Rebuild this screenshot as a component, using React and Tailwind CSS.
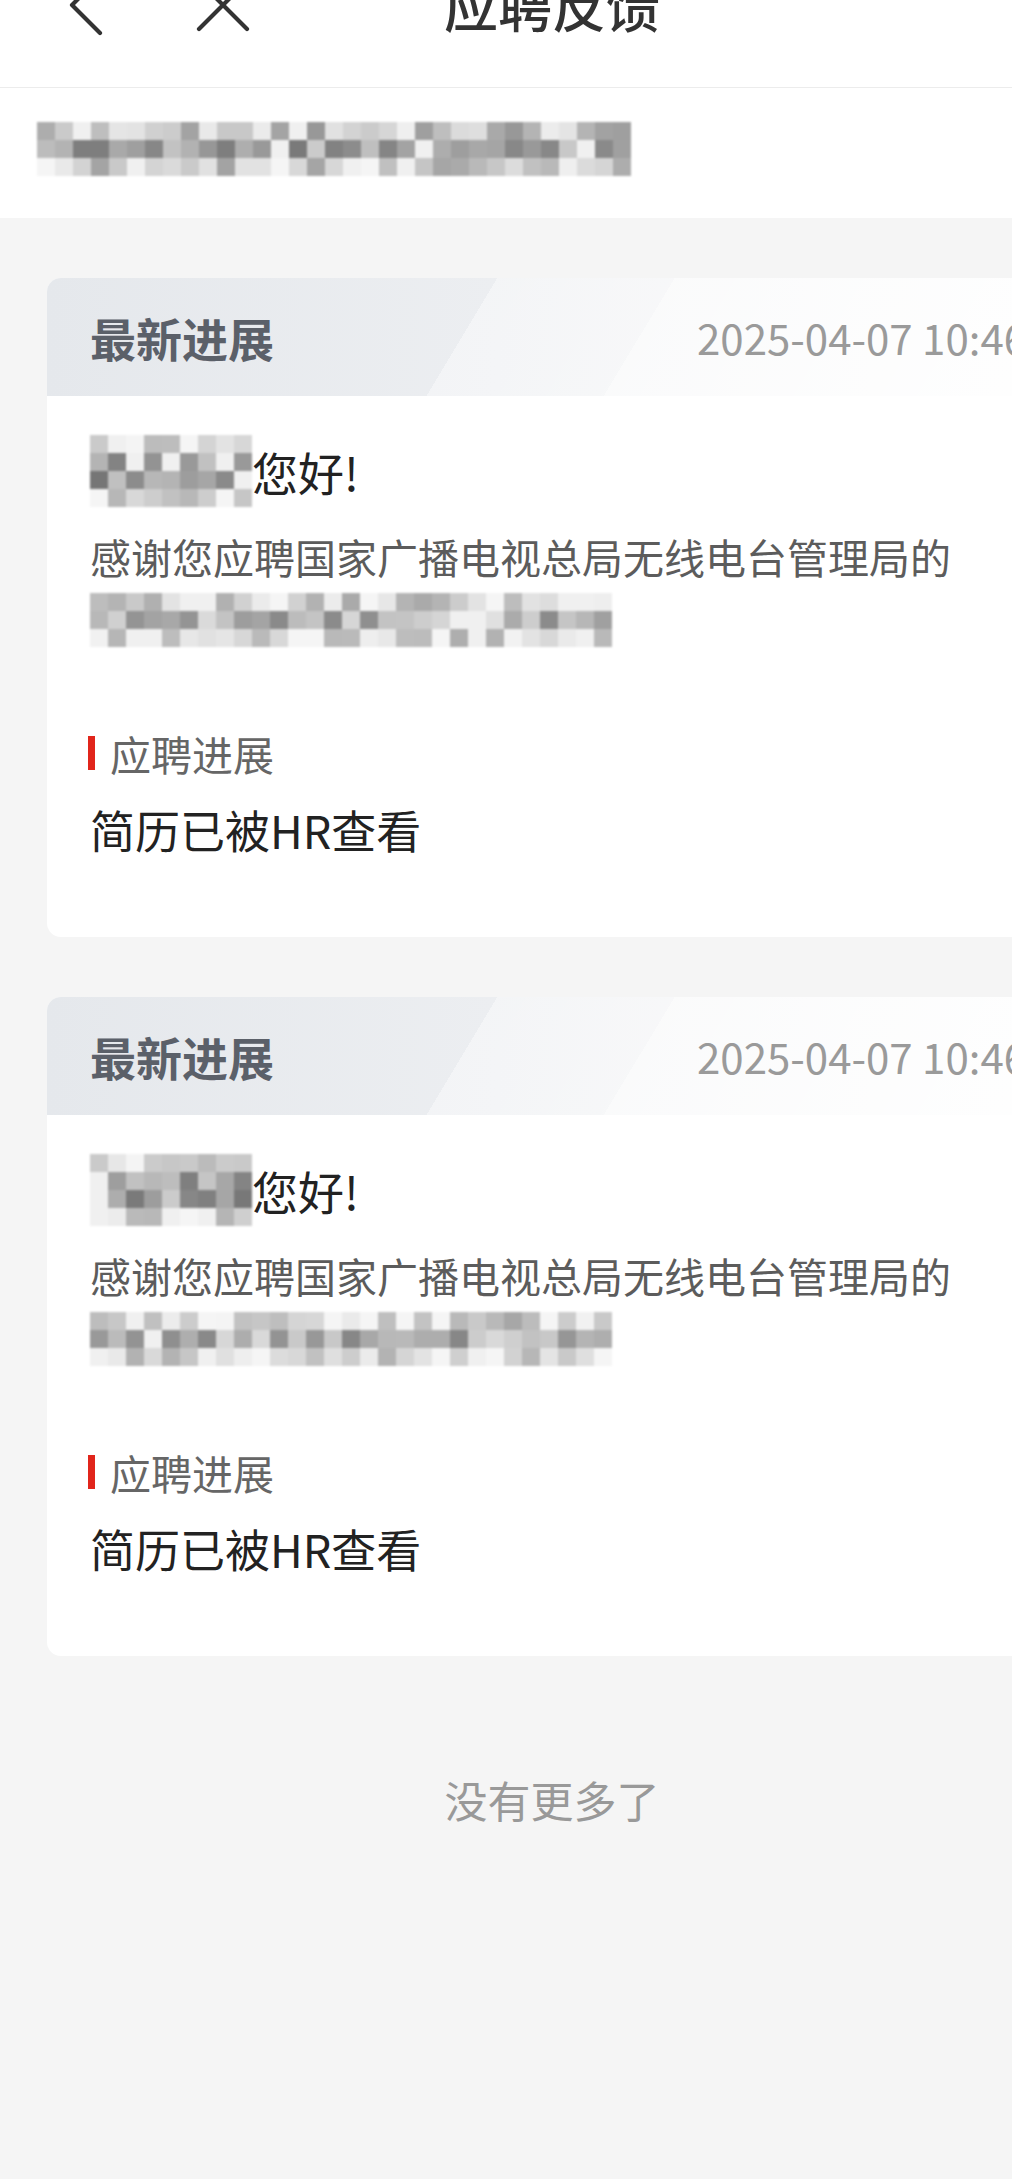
import React from "react";

function makeRand(seed) {
  let s = seed >>> 0;
  return () => {
    s = (s * 1664525 + 1013904223) >>> 0;
    return s / 4294967296;
  };
}

function Mosaic({ rows, cols, seed, profile, cell = 18 }) {
  const rand = makeRand(seed);
  const grid = [];
  for (let r = 0; r < rows; r++) {
    const row = [];
    for (let c = 0; c < cols; c++) {
      let v = profile[r] + Math.round((rand() - 0.5) * 90);
      if (rand() < 0.08) v = 240;
      v = Math.max(115, Math.min(245, v));
      row.push(v);
    }
    grid.push(row);
  }
  return (
    <div className="flex flex-col blur-[0.8px] shrink-0">
      {grid.map((row, r) => (
        <div key={r} className="flex">
          {row.map((v, c) => (
            <div
              key={c}
              style={{
                width: cell,
                height: cell,
                backgroundColor: `rgb(${v},${v},${v})`,
              }}
            />
          ))}
        </div>
      ))}
    </div>
  );
}

function Card({ seed }) {
  return (
    <div className="rounded-[14px] overflow-hidden bg-white">
      <div className="h-[118px] flex items-center justify-between pl-[43px] pr-[30px] bg-[image:linear-gradient(121deg,rgba(255,255,255,0)_386px,rgba(255,255,255,0.4)_386px,rgba(255,255,255,0.5)_538px,rgba(255,255,255,0.7)_538px,rgba(255,255,255,0.9)_900px),linear-gradient(90deg,#e5e8ec_0px,#eceef1_450px,#f1f2f4_700px,#f6f7f8_1010px)]">
        <div className="text-[46px] font-bold leading-none text-[#5b6069]">最新进展</div>
        <div className="text-[42px] leading-none text-[#9a9a9a] whitespace-nowrap">2025-04-07 10:46</div>
      </div>
      <div className="pl-[43px] pt-[39px] pb-[79px]">
        <div className="flex items-center h-[72px]">
          <Mosaic rows={4} cols={9} seed={seed} profile={[225, 165, 160, 225]} />
          <div className="text-[46px] leading-none text-[#222]">您好!</div>
        </div>
        <div className="mt-[17px] text-[41px] leading-[64px] text-[#5c5c5c] whitespace-nowrap">
          <div>感谢您应聘国家广播电视总局无线电台管理局的</div>
          <div className="h-[64px] flex items-center">
            <Mosaic rows={3} cols={29} seed={seed + 7} profile={[212, 180, 218]} />
          </div>
        </div>
        <div className="mt-[77px] h-[48px] flex items-center">
          <div className="w-[7px] h-[34px] bg-[#e1251b] mr-[15px] -ml-[2px]" />
          <div className="text-[41px] leading-none text-[#666]">应聘进展</div>
        </div>
        <div className="mt-[25px] text-[45px] leading-[56px] text-[#222]">简历已被HR查看</div>
      </div>
    </div>
  );
}

export default function App() {
  return (
    <div className="w-[1012px] min-h-[2179px] overflow-hidden bg-[#f5f5f5] font-['Noto_Sans_CJK_SC','Noto_Sans',sans-serif]">
      <div className="w-[1104px]">
        <div className="h-[88px] bg-white border-b border-[#ececec]">
          <div className="h-[10px] flex items-center">
            <div className="w-[251px] shrink-0 flex items-center">
              <svg className="ml-[68px] shrink-0" width="40" height="64" viewBox="0 0 40 64" fill="none">
                <path d="M32 4 L4 32 L32 60" stroke="#333" strokeWidth="4.2" strokeLinecap="round" strokeLinejoin="round" />
              </svg>
              <svg className="ml-[87px] shrink-0" width="56" height="56" viewBox="0 0 56 56" fill="none">
                <path d="M4 4 L52 52 M52 4 L4 52" stroke="#333" strokeWidth="4.2" strokeLinecap="round" />
              </svg>
            </div>
            <div className="flex-1 text-center text-[54px] font-medium leading-none text-[#333] whitespace-nowrap">应聘反馈</div>
            <div className="w-[251px] shrink-0" />
          </div>
        </div>
        <div className="h-[130px] bg-white pt-[34px] pl-[37px]">
          <Mosaic rows={3} cols={33} seed={42} profile={[195, 160, 205]} />
        </div>
        <div className="pt-[60px] px-[47px] flex flex-col gap-[60px]">
          <Card seed={11} />
          <Card seed={23} />
        </div>
        <div className="mt-[113px] text-center text-[43px] leading-[60px] text-[#999]">没有更多了</div>
      </div>
    </div>
  );
}
